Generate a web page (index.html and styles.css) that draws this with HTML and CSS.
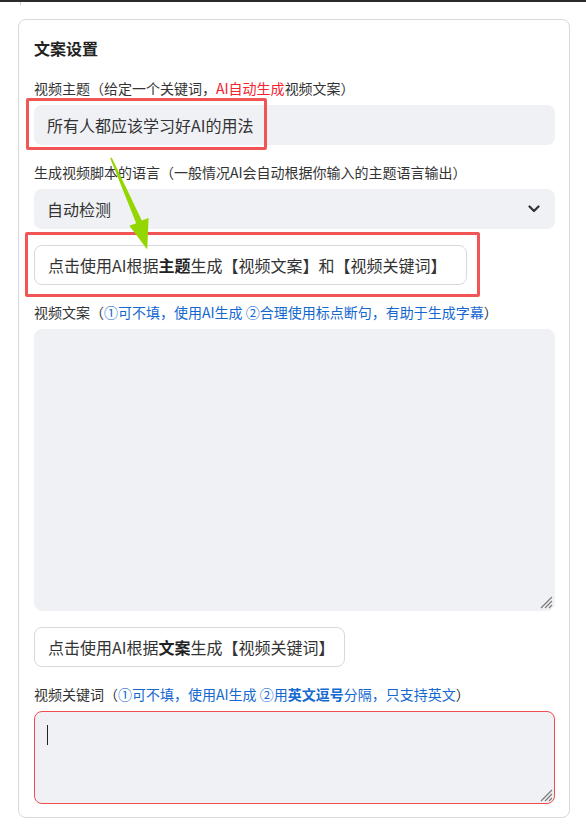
FILE: index.html
```
<!DOCTYPE html>
<html lang="zh-CN">
<head>
<meta charset="utf-8">
<title>文案设置</title>
<link rel="stylesheet" href="styles.css">
</head>
<body>
<div class="page">
  <div class="top-edge"></div>
  <section class="card">
    <h2 class="card-title">文案设置</h2>

    <div class="field">
      <label class="label">视频主题（给定一个关键词，<span class="red">AI自动生成</span>视频文案）</label>
      <div class="wrap">
        <input class="input" type="text" value="所有人都应该学习好AI的用法">
        <div class="highlight hl-topic"></div>
      </div>
    </div>

    <div class="field">
      <label class="label">生成视频脚本的语言（一般情况AI会自动根据你输入的主题语言输出）</label>
      <div class="select">
        <span>自动检测</span>
        <svg class="chevron" width="12" height="8" viewBox="0 0 12 8"><path d="M1.5 1.5 L6 6 L10.5 1.5" fill="none" stroke="#333" stroke-width="2.2" stroke-linecap="round" stroke-linejoin="round"/></svg>
      </div>
    </div>

    <div class="field">
      <div class="wrap inline">
        <button class="btn btn-wide" type="button">点击使用AI根据<b>主题</b>生成【视频文案】和【视频关键词】</button>
        <div class="highlight hl-btn"></div>
      </div>
    </div>

    <div class="field">
      <label class="label">视频文案（<span class="blue">①可不填，使用AI生成 ②合理使用标点断句，有助于生成字幕</span>）</label>
      <div class="wrap">
        <textarea class="textarea ta-script"></textarea>
        <svg class="grip" width="13" height="13" viewBox="0 0 13 13"><path d="M1 12 L12 1 M5 12 L12 5 M9 12 L12 9" stroke="#7a7a7a" stroke-width="1.2" fill="none"/></svg>
      </div>
    </div>

    <div class="field">
      <button class="btn btn-narrow" type="button">点击使用AI根据<b>文案</b>生成【视频关键词】</button>
    </div>

    <div class="field">
      <label class="label">视频关键词（<span class="blue">①可不填，使用AI生成 ②用<b>英文逗号</b>分隔，只支持英文</span>）</label>
      <div class="wrap">
        <textarea class="textarea ta-keywords"></textarea>
        <div class="caret"></div>
        <svg class="grip" width="13" height="13" viewBox="0 0 13 13"><path d="M1 12 L12 1 M5 12 L12 5 M9 12 L12 9" stroke="#7a7a7a" stroke-width="1.2" fill="none"/></svg>
      </div>
    </div>
  </section>

  <svg class="arrow" width="586" height="827" viewBox="0 0 586 827">
    <polygon points="110.3,158.6 111.7,157.6 141.8,220.6 148.6,218.0 147.2,249.5 129.4,225.8 136.2,223.2" fill="#94d600"/>
  </svg>
</div>
</body>
</html>
```

FILE: styles.css
```
* { box-sizing: border-box; }

html, body {
  margin: 0;
  padding: 0;
  background: #ffffff;
}

body {
  font-family: "Noto Sans CJK SC", "Noto Sans", sans-serif;
  color: #333333;
}

.page {
  position: relative;
  width: 586px;
  min-height: 827px;
}

.top-edge {
  height: 3px;
  border-top: 2px solid #2b2b2b;
  position: relative;
}

.top-edge::after {
  content: "";
  position: absolute;
  left: 20px;
  top: 0;
  width: 1px;
  height: 3px;
  background: #cfcfcf;
}

.card {
  margin: 16px 16px 0 18px;
  border: 1px solid #d9d9d9;
  border-radius: 8px;
  padding: 16px 14px 13px 15px;
}

.card-title {
  margin: 0 0 17px;
  font-size: 16px;
  line-height: 24px;
  font-weight: 700;
  color: #222222;
}

.field + .field {
  margin-top: 16px;
}

.label {
  display: block;
  font-size: 14px;
  line-height: 22px;
  margin-bottom: 6px;
  color: #333333;
}

.red { color: #f5222d; }
.blue { color: #1468d0; }
.blue b { font-weight: 700; }

.wrap {
  position: relative;
}

.wrap.inline {
  display: inline-block;
}

.input {
  display: block;
  width: 100%;
  height: 40px;
  border: none;
  border-radius: 8px;
  background: #f0f1f5;
  padding: 0 13px;
  font-family: inherit;
  font-size: 16px;
  color: #333333;
  outline: none;
}

.select {
  height: 40px;
  border-radius: 8px;
  background: #f0f1f5;
  padding: 0 15px 0 13px;
  display: flex;
  align-items: center;
  justify-content: space-between;
  font-size: 16px;
  color: #333333;
}

.btn {
  display: block;
  height: 40px;
  padding: 0 13px;
  border: 1px solid #d9d9d9;
  border-radius: 8px;
  background: #ffffff;
  font-family: inherit;
  font-size: 16px;
  color: #333333;
  white-space: nowrap;
}

.btn-wide { padding-right: 20px; }
.btn-narrow { padding-right: 10px; }

.btn b { font-weight: 700; color: #222; }

.textarea {
  display: block;
  width: 100%;
  border: 1px solid #f0f1f5;
  border-radius: 8px;
  background: #f0f1f5;
  padding: 12px;
  font-family: inherit;
  font-size: 16px;
  color: #333333;
  outline: none;
  resize: none;
}

.ta-script { height: 282px; }

.ta-keywords {
  height: 93px;
  border-color: #f04d4d;
}

.grip {
  position: absolute;
  right: 2px;
  bottom: 2px;
  pointer-events: none;
}

.caret {
  position: absolute;
  left: 13px;
  top: 14px;
  width: 1px;
  height: 20px;
  background: #222222;
}

.highlight {
  position: absolute;
  border: 3px solid #f25555;
  border-radius: 2px;
  pointer-events: none;
}

.hl-topic {
  left: -8px;
  top: -7px;
  width: 241px;
  height: 52px;
}

.hl-btn {
  left: -9px;
  top: -13px;
  width: 455px;
  height: 65px;
}

.arrow {
  position: absolute;
  left: 0;
  top: 0;
  pointer-events: none;
}
```
